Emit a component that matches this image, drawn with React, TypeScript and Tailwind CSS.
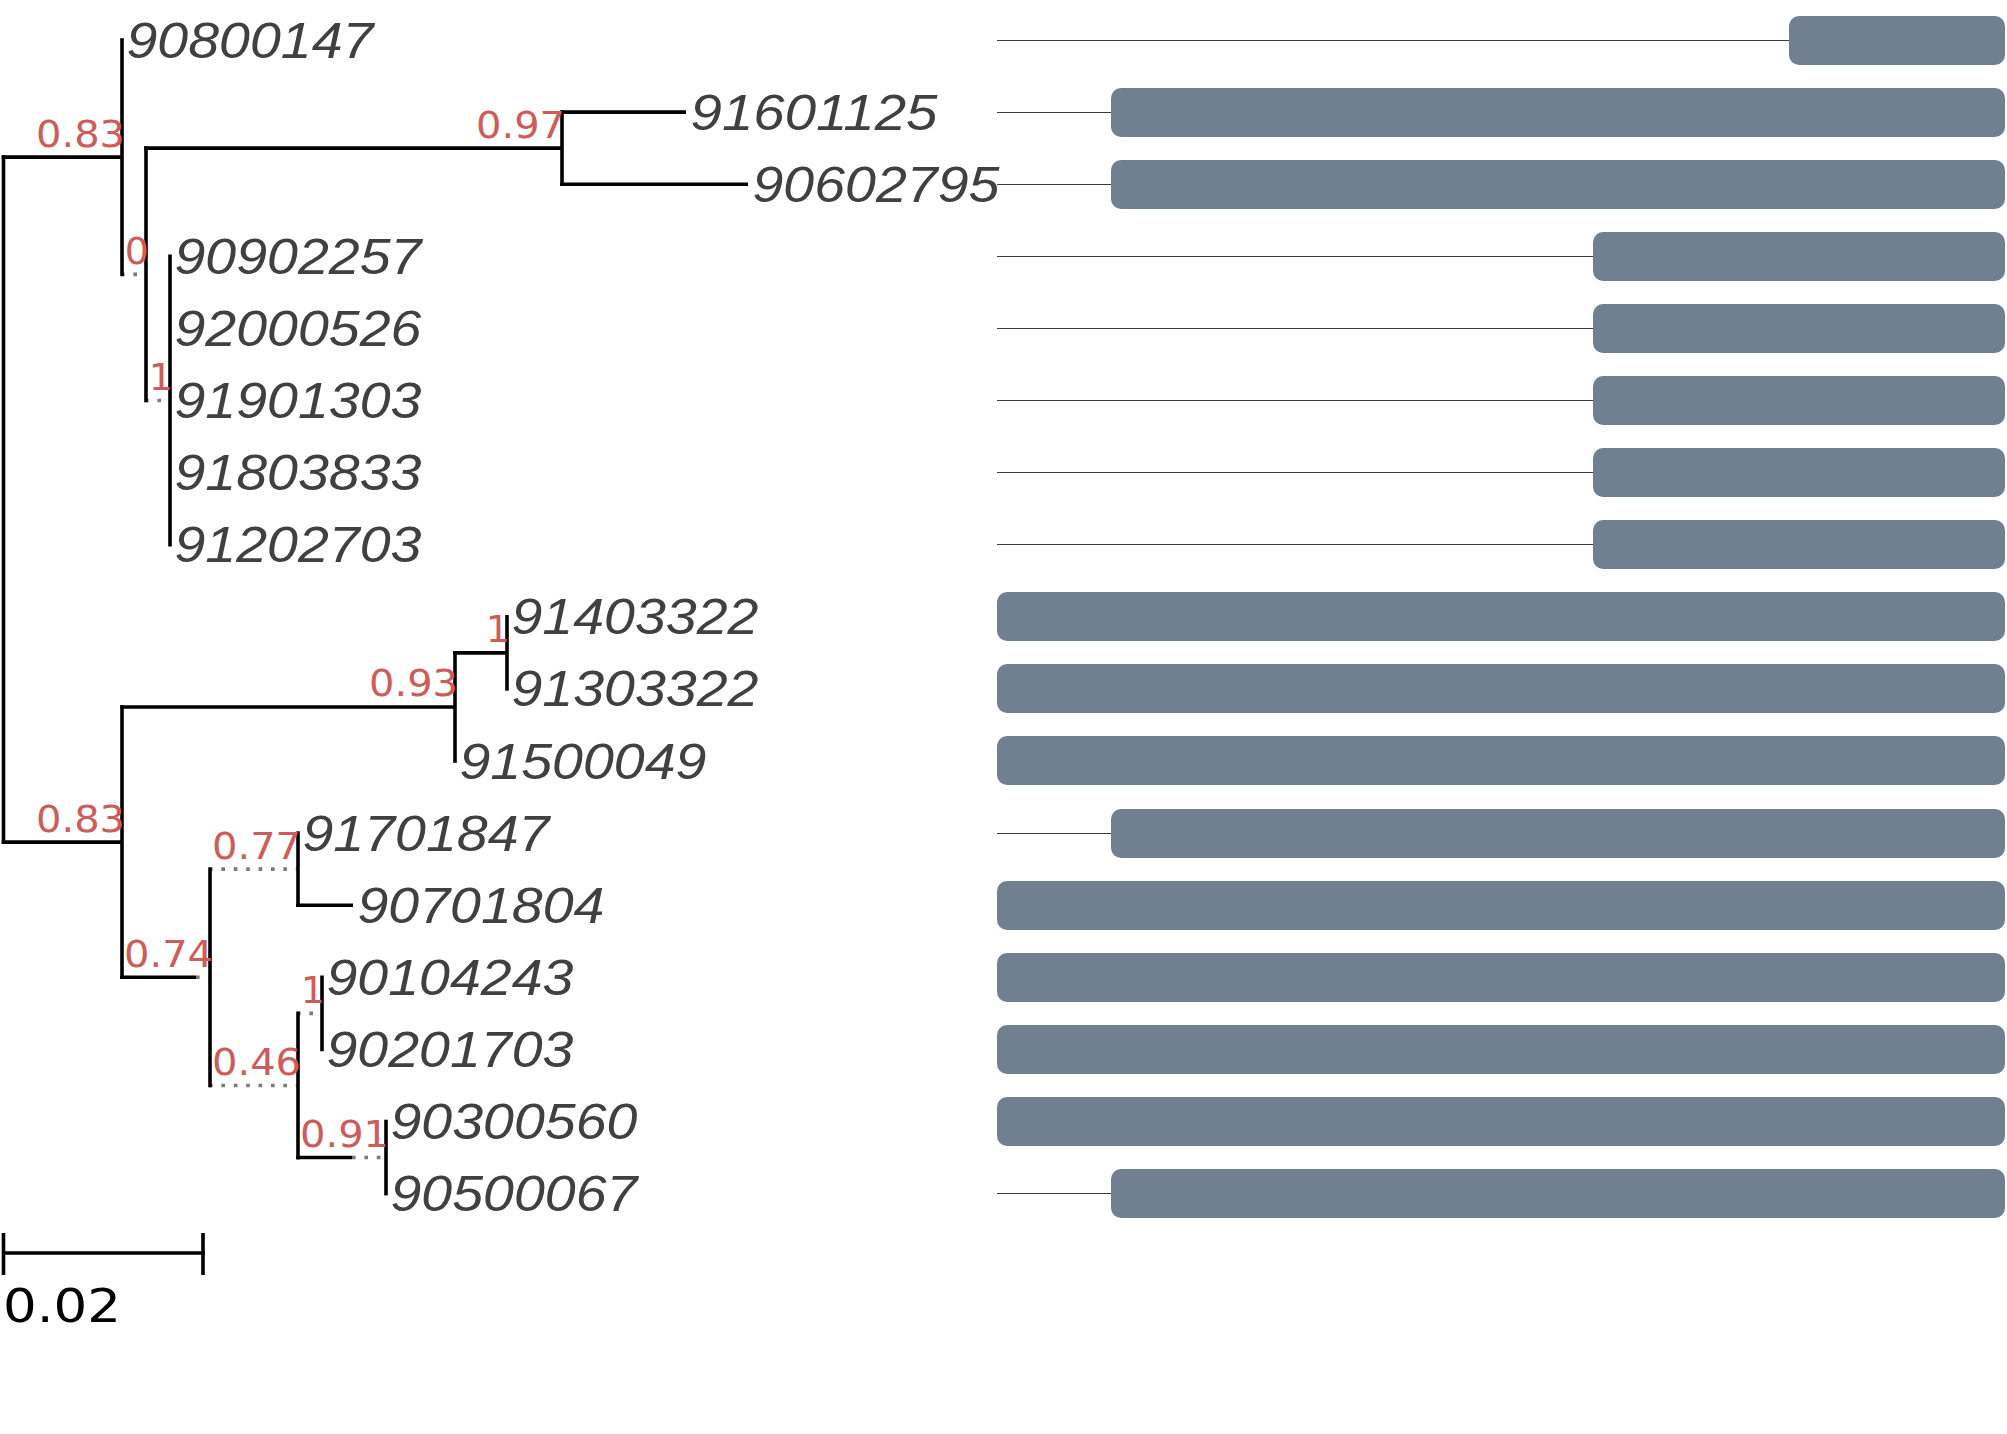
import React from "react";

const rowY = (n: number) => 40 + (n - 1) * 72.1;

const tips: [string, number, number][] = [
  ["90800147", 1, 122],
  ["91601125", 2, 686],
  ["90602795", 3, 748],
  ["90902257", 4, 170],
  ["92000526", 5, 170],
  ["91901303", 6, 170],
  ["91803833", 7, 170],
  ["91202703", 8, 170],
  ["91403322", 9, 507],
  ["91303322", 10, 507],
  ["91500049", 11, 455],
  ["91701847", 12, 298],
  ["90701804", 13, 353],
  ["90104243", 14, 322],
  ["90201703", 15, 322],
  ["90300560", 16, 386],
  ["90500067", 17, 386],
];

const yC = (rowY(2) + rowY(3)) / 2;
const yD = (rowY(4) + rowY(8)) / 2;
const yB = (yC + yD) / 2;
const yG = (rowY(9) + rowY(10)) / 2;
const yF = (yG + rowY(11)) / 2;
const yI = (rowY(12) + rowY(13)) / 2;
const yK = (rowY(14) + rowY(15)) / 2;
const yL = (rowY(16) + rowY(17)) / 2;
const yJ = (yK + yL) / 2;
const yH = (yI + yJ) / 2;
const yE = (yF + yH) / 2;
const yAA = (rowY(1) + yB) / 2;

// verticals: [x, y1, y2]
const verticals: [number, number, number][] = [
  [3.5, yAA, yE],
  [122, rowY(1), yB],
  [146, yC, yD],
  [562, rowY(2), rowY(3)],
  [170, rowY(4), rowY(8)],
  [122, yF, yH],
  [455, yG, rowY(11)],
  [507, rowY(9), rowY(10)],
  [210, yI, yJ],
  [298, rowY(12), rowY(13)],
  [298, yK, yL],
  [322, rowY(14), rowY(15)],
  [386, rowY(16), rowY(17)],
];

// solid horizontals: [y, x1, x2]
const horizontals: [number, number, number][] = [
  [yAA, 3.5, 122],
  [yE, 3.5, 122],
  [yC, 146, 562],
  [rowY(2), 562, 686],
  [rowY(3), 562, 748],
  [yF, 122, 455],
  [yG, 455, 507],
  [yH, 122, 196],
  [rowY(13), 298, 353],
  [yL, 298, 352],
];

const dotted: [number, number, number][] = [
  [yB, 121, 146],
  [yD, 145, 170],
  [yH, 196, 210],
  [yI, 209, 298],
  [yJ, 209, 298],
  [yK, 297, 322],
  [yL, 352, 386],
];

// support labels: [text, rightX, nodeY]
const supports: [string, number, number][] = [
  ["0.83", 122, yAA],
  ["0", 146, yB],
  ["0.97", 562, yC],
  ["1", 170, yD],
  ["0.83", 122, yE],
  ["0.93", 455, yF],
  ["1", 507, yG],
  ["0.74", 210, yH],
  ["0.77", 298, yI],
  ["0.46", 298, yJ],
  ["1", 322, yK],
  ["0.91", 386, yL],
];

const FULL = 1008;
const bars = [216, 894, 894, 412, 412, 412, 412, 412, FULL, FULL, FULL, 894, FULL, FULL, FULL, FULL, 894];

function Tree() {
  return (
    <svg width={998} height={1434} className="block shrink-0 overflow-visible">
      {dotted.map(([y, x1, x2], i) => (
        <line
          key={"d" + i}
          x1={x1}
          x2={x2}
          y1={y}
          y2={y}
          stroke="#7a7a7a"
          strokeWidth={3.6}
          strokeDasharray="3.6 8.8"
        />
      ))}
      {horizontals.map(([y, x1, x2], i) => (
        <line key={"h" + i} x1={x1 - 1.8} x2={x2} y1={y} y2={y} stroke="#000" strokeWidth={3.6} />
      ))}
      {verticals.map(([x, y1, y2], i) => (
        <line key={"v" + i} x1={x} x2={x} y1={y1 - 1.8} y2={y2 + 1.8} stroke="#000" strokeWidth={3.6} />
      ))}
      {supports.map(([t, x, y], i) => (
        <text
          key={"s" + i}
          x={x + 3}
          y={y - 10.5}
          textAnchor="end"
          fill="#cd5c5c"
          fontFamily="'DejaVu Sans', sans-serif"
          fontSize={38}
          {...(t.length > 1 ? { textLength: 89, lengthAdjust: "spacingAndGlyphs" } : {})}
        >
          {t}
        </text>
      ))}
      {tips.map(([t, r, x]) => (
        <text
          key={t}
          x={x + 4.5}
          y={rowY(r) + 17.5}
          fill="#404040"
          fontFamily="'Liberation Sans', Arial, sans-serif"
          fontStyle="italic"
          fontSize={50}
          textLength={247}
          lengthAdjust="spacingAndGlyphs"
        >
          {t}
        </text>
      ))}
      {/* scale bar */}
      <line x1={2} x2={205} y1={1253} y2={1253} stroke="#000" strokeWidth={3.6} />
      <line x1={3.5} x2={3.5} y1={1233} y2={1275} stroke="#000" strokeWidth={3.6} />
      <line x1={203} x2={203} y1={1233} y2={1275} stroke="#000" strokeWidth={3.6} />
      <text
        x={3}
        y={1322}
        fill="#000"
        fontFamily="'DejaVu Sans', sans-serif"
        fontSize={47}
        textLength={118}
        lengthAdjust="spacingAndGlyphs"
      >
        0.02
      </text>
    </svg>
  );
}

export default function App() {
  return (
    <div className="flex w-[2007px] h-[1434px] bg-white overflow-hidden">
      <Tree />
      <div className="flex flex-col w-[1010px] pt-[4px] pr-[2px] -ml-px">
        {bars.map((w, i) => (
          <div key={i} className="flex h-[72.1px] items-center">
            <div className="flex-1 h-px bg-[#3a3a3a]" />
            <div className="h-[49px] rounded-[10px] bg-[#708090] shrink-0" style={{ width: w }} />
          </div>
        ))}
      </div>
    </div>
  );
}
